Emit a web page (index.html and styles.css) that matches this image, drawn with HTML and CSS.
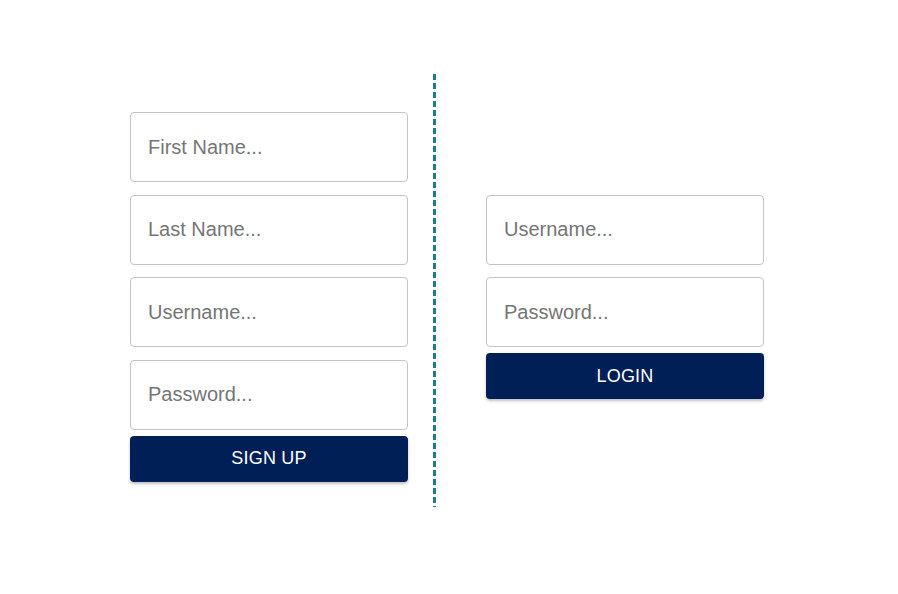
FILE: index.html
```html
<!DOCTYPE html>
<html>
<head>
<meta charset="utf-8">
<link rel="stylesheet" href="styles.css">
</head>
<body>
<div class="page">
  <form class="form signup">
    <input class="field" type="text" placeholder="First Name...">
    <input class="field" type="text" placeholder="Last Name...">
    <input class="field" type="text" placeholder="Username...">
    <input class="field last" type="password" placeholder="Password...">
    <button class="btn" type="button">SIGN UP</button>
  </form>
  <div class="divider"></div>
  <form class="form login">
    <input class="field" type="text" placeholder="Username...">
    <input class="field last" type="password" placeholder="Password...">
    <button class="btn" type="button">LOGIN</button>
  </form>
</div>
</body>
</html>
```

FILE: styles.css
```css
html, body {
  margin: 0;
  padding: 0;
  background: #ffffff;
  font-family: "Liberation Sans", Arial, sans-serif;
}
.page {
  width: 898px;
  height: 594px;
  display: flex;
  align-items: center;
  padding-left: 130px;
  box-sizing: border-box;
}
.form {
  display: flex;
  flex-direction: column;
  width: 278px;
  gap: 12.5px;
}
.field {
  box-sizing: border-box;
  width: 278px;
  height: 70px;
  border: 1px solid #c4c4c4;
  border-radius: 4px;
  padding: 0 17px;
  font-family: "Liberation Sans", Arial, sans-serif;
  font-size: 20px;
  color: #333;
  outline: none;
  background: #fff;
}
.field::placeholder {
  color: #757575;
}
.field.last {
  margin-bottom: -6.5px;
}
.btn {
  height: 46px;
  border: none;
  border-radius: 4px;
  background: #001f56;
  color: #ffffff;
  font-family: "Liberation Sans", Arial, sans-serif;
  font-size: 18px;
  letter-spacing: 0.2px;
  box-shadow: 0 2px 3px rgba(0,0,0,0.25);
  cursor: pointer;
}
.divider {
  width: 3px;
  height: 433px;
  margin-left: 25px;
  margin-right: 50px;
  margin-top: -14px;
  background: repeating-linear-gradient(to bottom, #18808c 0 6px, transparent 6px 9px);
}
```
